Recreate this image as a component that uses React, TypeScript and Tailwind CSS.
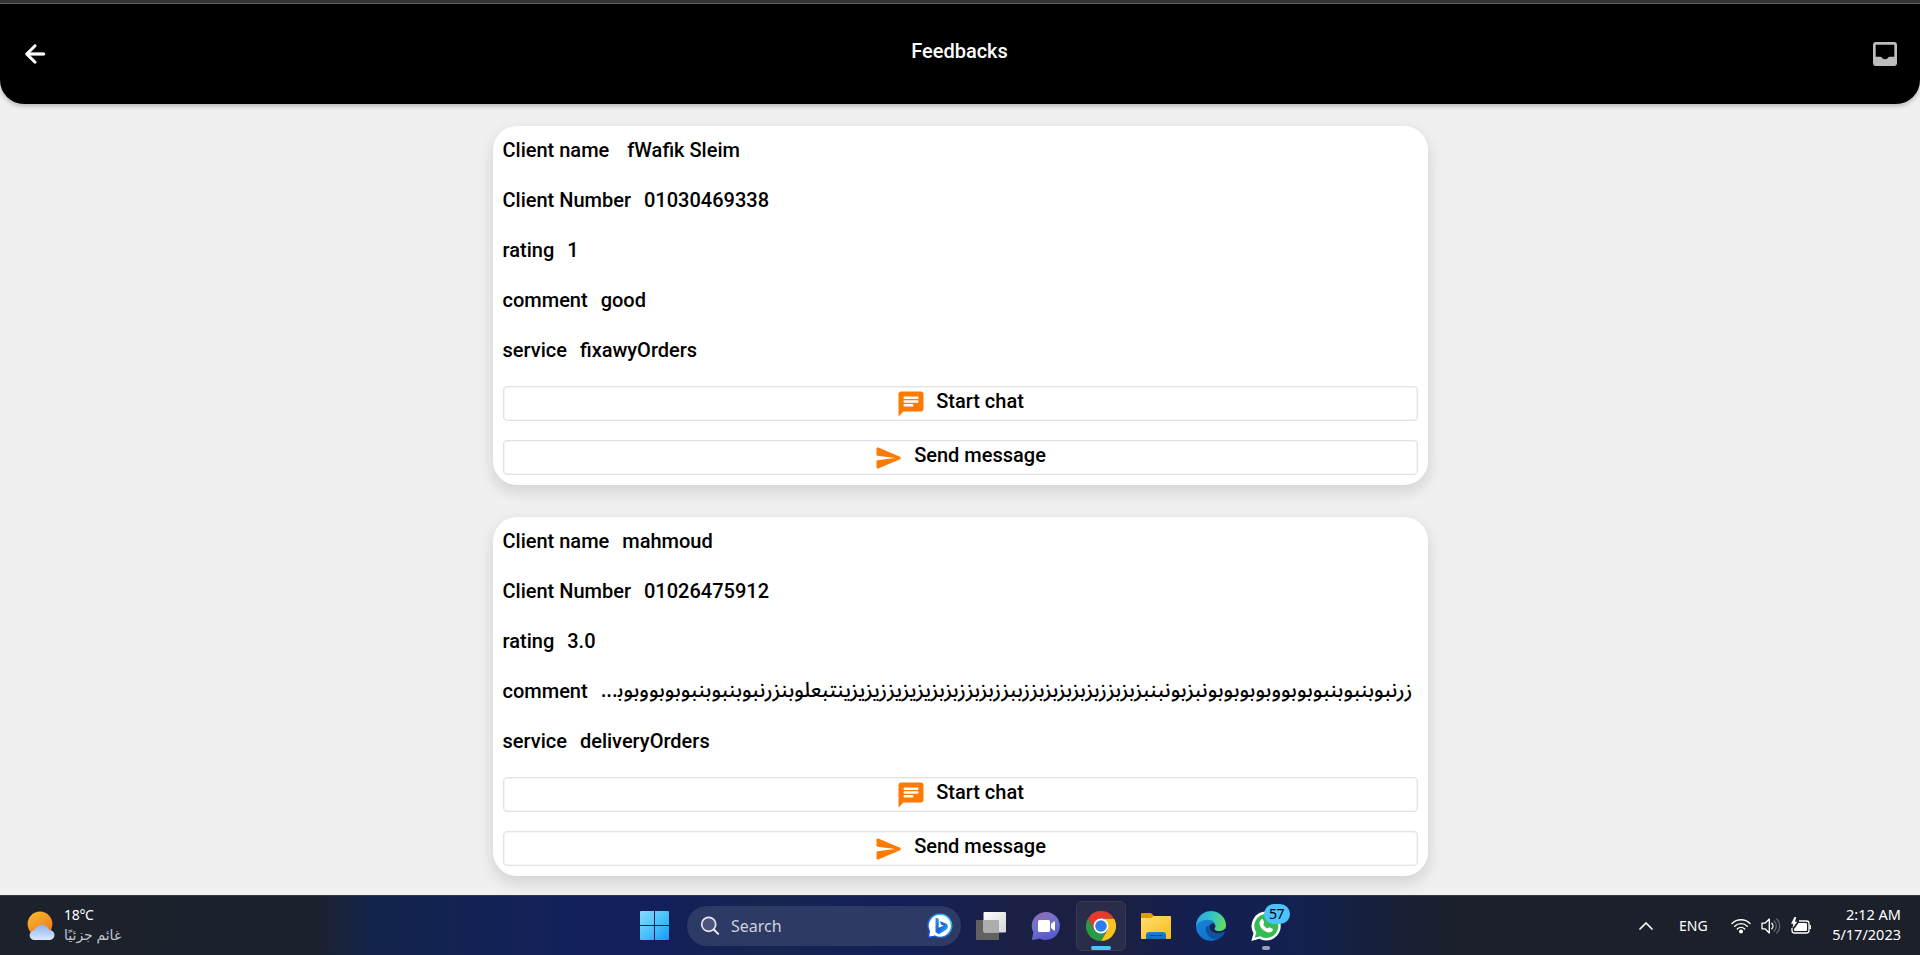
import React from "react";

type Feedback = {
  name: string;
  number: string;
  rating: string;
  comment: string;
  service: string;
  rtl?: boolean;
};

const feedbacks: Feedback[] = [
  { name: " fWafik Sleim", number: "01030469338", rating: "1", comment: "good", service: "fixawyOrders" },
  {
    name: "mahmoud",
    number: "01026475912",
    rating: "3.0",
    comment:
      "زرنبوبنبوبنبوبوبووبوبوبوبونبزبونبنبزبزبززبزبزبزبزبززببززبزبززبزبزيزيزيززيزيزينتبعلوبنزرنبوبنبوبنبوبوبووبوب\u200D...",
    service: "deliveryOrders",
    rtl: true,
  },
];

function BackIcon() {
  return (
    <svg viewBox="0 0 24 24" className="size-[30px] fill-white stroke-white" strokeWidth="0.5">
      <path d="M19 11H7.83l4.88-4.88c.39-.39.39-1.03 0-1.42-.39-.39-1.02-.39-1.41 0l-6.59 6.59c-.39.39-.39 1.02 0 1.41l6.59 6.59c.39.39 1.02.39 1.41 0 .39-.39.39-1.02 0-1.41L7.83 13H19c.55 0 1-.45 1-1s-.45-1-1-1z" />
    </svg>
  );
}

function InboxIcon() {
  return (
    <svg viewBox="0 0 24 24" className="size-8 fill-[#bdbdbd]">
      <path d="M19 3H5c-1.1 0-2 .9-2 2v14c0 1.1.9 2 2 2h14c1.1 0 2-.9 2-2V5c0-1.1-.9-2-2-2zm0 11h-3.56c-.36 0-.68.19-.86.5-.52.9-1.47 1.5-2.58 1.5s-2.06-.6-2.58-1.5c-.18-.31-.51-.5-.86-.5H5V5h14v9z" />
    </svg>
  );
}

function ChatIcon() {
  return (
    <svg viewBox="0 0 24 24" className="size-[30px] shrink-0 fill-[#ff7a00]">
      <path d="M20 2H4c-1.1 0-2 .9-2 2v18l4-4h14c1.1 0 2-.9 2-2V4c0-1.1-.9-2-2-2zM7 9h10c.55 0 1 .45 1 1s-.45 1-1 1H7c-.55 0-1-.45-1-1s.45-1 1-1zm6 5H7c-.55 0-1-.45-1-1s.45-1 1-1h6c.55 0 1 .45 1 1s-.45 1-1 1zm4-6H7c-.55 0-1-.45-1-1s.45-1 1-1h10c.55 0 1 .45 1 1s-.45 1-1 1z" />
    </svg>
  );
}

function SendIcon() {
  return (
    <svg viewBox="0 0 24 24" className="size-[30px] shrink-0 fill-[#ff7a00]">
      <path d="M3.4 20.4l17.45-7.48c.81-.35.81-1.49 0-1.84L3.4 3.6c-.66-.29-1.39.2-1.39.91L2 9.12c0 .5.37.93.87.99L17 12 2.87 13.88c-.5.07-.87.5-.87 1v4.61c0 .71.73 1.2 1.4.91z" />
    </svg>
  );
}

function Row({ label, value, rtl }: { label: string; value: string; rtl?: boolean }) {
  return (
    <div className="flex h-[30px] items-center gap-[13px] whitespace-pre">
      <span>{label}</span>
      {rtl ? (
        <span dir="rtl" className="font-['Noto_Sans_Arabic','DejaVu_Sans',sans-serif] text-[20.7px] font-medium leading-[30px]">
          {value}
        </span>
      ) : (
        <span>{value}</span>
      )}
    </div>
  );
}

function ActionButton({ icon, label }: { icon: React.ReactNode; label: string }) {
  return (
    <button className="flex h-[35px] w-full items-center justify-center gap-2.5 rounded border border-[#e2e2e2] shadow-[inset_0_0_0_1px_#f5f5f5]">
      {icon}
      <span className="-mt-[5px]">{label}</span>
    </button>
  );
}

function Card({ f }: { f: Feedback }) {
  return (
    <article className="h-[359px] w-[935px] rounded-3xl bg-white px-2.5 pt-[9px] shadow-[0_6px_14px_2px_rgba(0,0,0,0.11)]">
      <div className="flex flex-col gap-5">
        <Row label="Client name" value={f.name} />
        <Row label="Client Number" value={f.number} />
        <Row label="rating" value={f.rating} />
        <Row label="comment" value={f.comment} rtl={f.rtl} />
        <Row label="service" value={f.service} />
      </div>
      <div className="mt-[21px] flex flex-col gap-[19px]">
        <ActionButton icon={<ChatIcon />} label="Start chat" />
        <ActionButton icon={<SendIcon />} label="Send message" />
      </div>
    </article>
  );
}

function WeatherIcon() {
  return (
    <svg viewBox="0 0 28 30" className="h-[30px] w-7">
      <defs>
        <linearGradient id="sun" x1="0.2" y1="0" x2="0.8" y2="1">
          <stop offset="0" stopColor="#f5b92e" />
          <stop offset="1" stopColor="#f07316" />
        </linearGradient>
        <linearGradient id="cloud" x1="0" y1="0" x2="0" y2="1">
          <stop offset="0" stopColor="#8db4f2" />
          <stop offset="1" stopColor="#dce8fb" />
        </linearGradient>
      </defs>
      <circle cx="13" cy="13" r="12.4" fill="url(#sun)" />
      <path d="M7.5 29a4.7 4.7 0 0 1-.4-9.4 8 8 0 0 1 15-.6 5 5 0 0 1 .8 10z" fill="url(#cloud)" />
    </svg>
  );
}

function WindowsIcon() {
  return (
    <svg viewBox="0 0 29 29" className="size-[29px]">
      <defs>
        <linearGradient id="win" x1="0" y1="0" x2="1" y2="1">
          <stop offset="0" stopColor="#84dcff" />
          <stop offset="0.5" stopColor="#4cc2fa" />
          <stop offset="1" stopColor="#1598fa" />
        </linearGradient>
      </defs>
      <path d="M1 0h13v14H0V1a1 1 0 0 1 1-1zM15 0h13a1 1 0 0 1 1 1v13H15zM0 15h14v14H1a1 1 0 0 1-1-1zM15 15h14v13a1 1 0 0 1-1 1H15z" fill="url(#win)" />
    </svg>
  );
}

function SearchGlyph() {
  return (
    <svg viewBox="0 0 20 20" className="size-5 fill-none stroke-[#e6e8ee]" strokeWidth="1.7" strokeLinecap="round">
      <circle cx="8.7" cy="8.3" r="7" fill="#4b5579" />
      <path d="M13.8 13.5l4.4 4.4" strokeWidth="2" />
    </svg>
  );
}

function BingIcon() {
  return (
    <svg viewBox="0 0 26 26" className="size-[26px]">
      <defs>
        <linearGradient id="bingRing" x1="0" y1="1" x2="1" y2="0">
          <stop offset="0" stopColor="#1440d8" />
          <stop offset="0.6" stopColor="#1f8df2" />
          <stop offset="1" stopColor="#30dcf0" />
        </linearGradient>
        <linearGradient id="bingB" x1="0" y1="0" x2="1" y2="1">
          <stop offset="0" stopColor="#2b9bf3" />
          <stop offset="0.5" stopColor="#1a5fe0" />
          <stop offset="1" stopColor="#2fd3ea" />
        </linearGradient>
      </defs>
      <path d="M13.2 1.2a11.6 11.6 0 1 1-5.3 22L1.3 24.6l1-6.5A11.6 11.6 0 0 1 13.2 1.2z" fill="#fff" stroke="url(#bingRing)" strokeWidth="1.5" />
      <path d="M8.5 4.5l3.2 1.2v9l5-1.9-2.6-1.2-1.5-3.6 6.4 2.6a3.6 3.6 0 0 1 .3 6.2l-7.4 4.4-3.4-2.2z" fill="url(#bingB)" />
    </svg>
  );
}

function TaskViewIcon() {
  return (
    <svg viewBox="0 0 30 30" className="size-[30px]">
      <defs>
        <linearGradient id="tv" x1="0" y1="0" x2="1" y2="1">
          <stop offset="0" stopColor="#ffffff" />
          <stop offset="1" stopColor="#d5d5d8" />
        </linearGradient>
      </defs>
      <rect x="0" y="9" width="23" height="20" rx="1" fill="#62615f" />
      <rect x="7.5" y="1" width="22.5" height="20.5" rx="1" fill="url(#tv)" />
      <path d="M7.5 9H22a1 1 0 0 1 1 1v11.5H8.5a1 1 0 0 1-1-1z" fill="#adadad" />
    </svg>
  );
}

function MeetIcon() {
  return (
    <svg viewBox="0 0 30 30" className="size-[30px]">
      <defs>
        <linearGradient id="meet" x1="0.2" y1="0" x2="0.6" y2="1">
          <stop offset="0" stopColor="#8d6bb4" />
          <stop offset="0.5" stopColor="#7072cc" />
          <stop offset="1" stopColor="#5556c9" />
        </linearGradient>
      </defs>
      <path d="M15 1a14 14 0 1 1-6 26.7L.8 29l1.5-7.5A14 14 0 0 1 15 1z" fill="url(#meet)" />
      <rect x="7" y="9" width="12" height="12" rx="1.5" fill="#fff" />
      <path d="M20 13l3-2.5q1-.5 1 .5v8q0 1-1 .5l-3-2.5z" fill="#fff" />
    </svg>
  );
}

function ChromeIcon() {
  return (
    <svg viewBox="0 0 48 48" className="size-[30px]">
      <path d="M24 12h20.8A24 24 0 0 1 24 48l10.4-18z" fill="#fcc31e" />
      <path d="M3.2 12A24 24 0 0 0 24 48l10.4-18H13.6z" fill="#2a9a48" />
      <path d="M24 12h20.8A24 24 0 0 0 3.2 12l10.4 18z" fill="#e33b2e" />
      <circle cx="24" cy="24" r="12" fill="#fff" />
      <circle cx="24" cy="24" r="9.3" fill="#2f7bea" />
    </svg>
  );
}

function FolderIcon() {
  return (
    <svg viewBox="0 0 30 30" className="size-[30px]">
      <defs>
        <linearGradient id="fold" x1="0" y1="0" x2="1" y2="1">
          <stop offset="0" stopColor="#ffdf70" />
          <stop offset="1" stopColor="#fbbb1a" />
        </linearGradient>
        <linearGradient id="foldBlue" x1="0" y1="0" x2="0" y2="1">
          <stop offset="0" stopColor="#1583d9" />
          <stop offset="1" stopColor="#0d6ec0" />
        </linearGradient>
      </defs>
      <path d="M1 2h9l3 3v8H0V3a1 1 0 0 1 1-1z" fill="#dd9e04" />
      <path d="M0 7h10l3-2h16a1 1 0 0 1 1 1v21a1 1 0 0 1-1 1H1a1 1 0 0 1-1-1z" fill="url(#fold)" />
      <path d="M8 21h14a3 3 0 0 1 3 3v4H5v-4a3 3 0 0 1 3-3z" fill="url(#foldBlue)" />
      <path d="M9 24.5h12" stroke="#0a4f94" strokeWidth="1.2" strokeLinecap="round" />
    </svg>
  );
}

function EdgeIcon() {
  return (
    <svg viewBox="0 0 30 30" className="size-[30px]">
      <defs>
        <linearGradient id="edgeTop" x1="0" y1="0.3" x2="1" y2="0.5">
          <stop offset="0" stopColor="#2aa5e0" />
          <stop offset="0.5" stopColor="#35c3c8" />
          <stop offset="1" stopColor="#65dc5a" />
        </linearGradient>
        <linearGradient id="edgeLeft" x1="0" y1="0" x2="0.6" y2="1">
          <stop offset="0" stopColor="#1a8cd8" />
          <stop offset="1" stopColor="#0b6fd0" />
        </linearGradient>
      </defs>
      <circle cx="15" cy="15" r="15" fill="url(#edgeLeft)" />
      <path d="M10 15.5C8 21 13 28.5 21 28.6A15 15 0 0 0 28.5 21.8q.3-1.2-1-.8C20 24.5 13 20.5 13.8 14.5z" fill="#11529f" />
      <path d="M.4 12A15 15 0 0 1 30 14c0 4.2-3.3 6.2-6.8 6.2-3 0-4.8-1-4.8-2.2 0-.8 1-1.2 1-3.2 0-3.2-3-6-7.6-6C6.5 8.8 2 11 .1 15z" fill="url(#edgeTop)" />
      <path d="M19.4 14.8c0 2-1 2.4-1 3.2 0 1.2 1.8 2.2 4.8 2.2 2.6 0 4.6-1 5.800-2.800q2.500 1.800 1 5.400l-1.500-1q.3-1.200-1-.8C20 24.500 13 20.500 13.800 14.800c1-3.500 4.600-3.500 5.600 0z" fill="#18234f" />
    </svg>
  );
}

function WhatsappIcon() {
  return (
    <svg viewBox="0 0 30 30" className="size-[30px]">
      <path d="M15.2.5a14.5 14.5 0 1 1-6.8 27.3L.3 30l2.2-7.8A14.5 14.5 0 0 1 15.2.5z" fill="#fff" />
      <path d="M15.2 3a12 12 0 1 1-6 22.3l-5.4 1.4 1.5-5.2A12 12 0 0 1 15.2 3z" fill="#36bb54" />
      <path d="M10.3 8.5c.6-.6 1.4-.5 1.8.3l1 2.4c.2.6 0 1-.8 2 .9 2 2.3 3.4 4.5 4.4.8-.8 1.3-1.5 2-1.2l2.6 1.3c.6.3.5.9.2 1.7-.7 1.7-2.6 2.4-4.3 2-4.3-1.1-7.6-4.2-8.7-8-.4-1.7.3-3.7 1.7-4.9z" fill="#fff" />
    </svg>
  );
}

function WifiIcon() {
  return (
    <svg viewBox="0 0 20 16" className="h-4 w-5 fill-none stroke-white" strokeWidth="1.4" strokeLinecap="round">
      <path d="M1 5.4a13 13 0 0 1 18 0M3.7 8.2a9 9 0 0 1 12.6 0M6.3 10.9a5.3 5.3 0 0 1 7.4 0" />
      <circle cx="10" cy="13.5" r="1.3" fill="#fff" />
    </svg>
  );
}

function SpeakerIcon() {
  return (
    <svg viewBox="0 0 20 18" className="h-[18px] w-5 fill-none stroke-white" strokeWidth="1.3" strokeLinecap="round" strokeLinejoin="round">
      <path d="M1 6.2h3L8.300 2v14L4 11.800H1z" />
      <path d="M10.8 6.2a4 4 0 0 1 0 5.6" />
      <path d="M13.2 4a7 7 0 0 1 0 10M15.8 2a10 10 0 0 1 0 14" stroke="#646871" />
    </svg>
  );
}

function BatteryIcon() {
  return (
    <svg viewBox="0 0 20 18" className="h-[18px] w-5">
      <path d="M8 4h7.5A2.5 2.5 0 0 1 18 6.5v7a2.5 2.5 0 0 1-2.5 2.5h-12A2.5 2.5 0 0 1 1 13.5V11" fill="none" stroke="#fff" strokeWidth="1.3" />
      <path d="M7.5 6h7.5a1 1 0 0 1 1 1v6a1 1 0 0 1-1 1H4a1 1 0 0 1-1-1v-1zM18.5 8h1q.5 0 .5.5v3q0 .5-.5.5h-1z" fill="#fff" />
      <path d="M3.5 0L0 6.800h2.300L1.500 11l4.800-6.300H4L5.200 0z" fill="#fff" />
    </svg>
  );
}

function Slot({ children }: { children: React.ReactNode }) {
  return <div className="flex w-[55px] justify-center">{children}</div>;
}

function Taskbar() {
  return (
    <footer className="flex h-[60px] shrink-0 items-center border-t border-[#2c3a48] bg-[linear-gradient(90deg,#1c212b_0px,#1c222d_310px,#12234b_375px,#13215a_560px,#131f58_670px,#14264f_770px,#131f58_900px,#1a2044_1010px,#1b2042_1120px,#141f50_1190px,#12214f_1300px,#161f3c_1370px,#1b202c_1450px,#1b202b_1920px)] font-['Noto_Sans','DejaVu_Sans',sans-serif] text-white">
      <div className="flex w-[640px] items-center gap-[9px] pl-[27px]">
        <WeatherIcon />
        <div className="-mt-0.5 flex flex-col text-[14px] leading-5">
          <span className="tracking-[-0.3px]">18°C</span>
          <span dir="rtl" className="text-[14px] text-[#c3c6cb]">غائم جزئيًا</span>
        </div>
      </div>
      <WindowsIcon />
      <div className="ml-[18px] mr-[2px] flex h-10 w-[274px] items-center rounded-full bg-[#2e3a66] pl-[13px] pr-2">
        <SearchGlyph />
        <span className="ml-[11px] flex-1 text-[16px] text-[#cdd2df]">Search</span>
        <BingIcon />
      </div>
      <Slot><TaskViewIcon /></Slot>
      <Slot><MeetIcon /></Slot>
      <Slot>
        <div className="relative flex size-[50px] items-center justify-center rounded-md border border-[#363a57] bg-[#2a2d49]">
          <ChromeIcon />
          <span className="absolute bottom-0 h-1 w-5 rounded-full bg-[#4cc2ff]" />
        </div>
      </Slot>
      <Slot><FolderIcon /></Slot>
      <Slot><EdgeIcon /></Slot>
      <Slot>
        <div className="relative flex size-[50px] items-center justify-center">
          <WhatsappIcon />
          <span className="absolute left-[23px] top-[3px] flex h-5 w-[26px] items-center justify-center rounded-full bg-[#4cc2ff] text-[14px] tracking-[-0.5px] text-black">57</span>
          <span className="absolute bottom-px h-1 w-2 rounded-full bg-[#9a9fb2]" />
        </div>
      </Slot>
      <div className="flex flex-1 items-center justify-end pr-[19px]">
        <svg viewBox="0 0 14 8" className="mr-[26px] h-2 w-3.5 fill-none stroke-white" strokeWidth="1.7" strokeLinecap="round">
          <path d="M1 7l6-6 6 6" />
        </svg>
        <span className="w-[30px] text-[14px]">ENG</span>
        <div className="ml-[22px] flex items-center gap-2.5">
          <WifiIcon />
          <SpeakerIcon />
          <BatteryIcon />
        </div>
        <div className="-mt-[3px] flex w-[90px] flex-col items-end text-[14.5px] leading-5">
          <span>2:12 AM</span>
          <span>5/17/2023</span>
        </div>
      </div>
    </footer>
  );
}

export default function App() {
  return (
    <div className="flex h-[955px] w-[1920px] flex-col overflow-hidden bg-[#f0f0f0] font-[Roboto,sans-serif] text-black">
      <div className="h-1 shrink-0 border-b border-[#666] bg-[#353535]" />
      <header className="flex h-[100px] shrink-0 items-center justify-between rounded-b-3xl bg-black pl-5 pr-[19px] shadow-[0_2px_5px_rgba(0,0,0,0.25)]">
        <BackIcon />
        <h1 className="-mt-1.5 text-[20px] font-medium text-white">Feedbacks</h1>
        <InboxIcon />
      </header>
      <main className="flex min-h-0 flex-1 flex-col items-center gap-8 overflow-hidden pt-[22px] text-[20px] font-medium">
        {feedbacks.map((f) => (
          <Card key={f.number} f={f} />
        ))}
      </main>
      <Taskbar />
    </div>
  );
}
